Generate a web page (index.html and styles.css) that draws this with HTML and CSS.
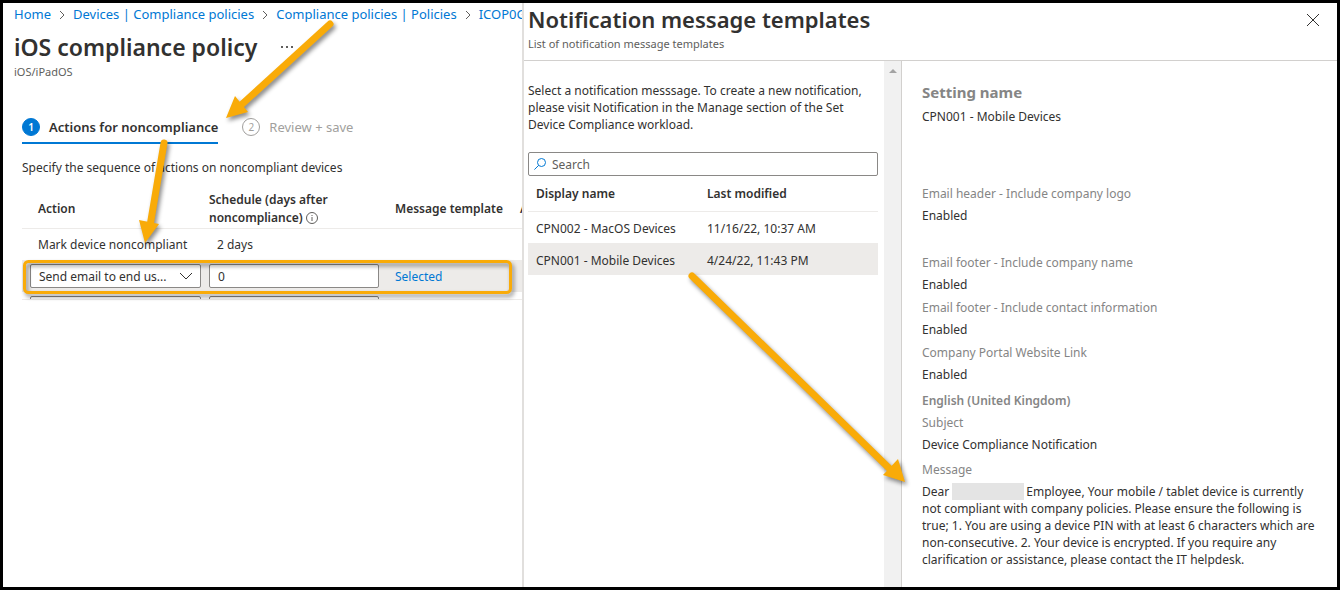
FILE: index.html
```html
<!DOCTYPE html>
<html lang="en">
<head>
    <meta charset="UTF-8">
    <meta name="viewport" content="width=device-width, initial-scale=1.0">
    <title>iOS compliance policy</title>
    <link rel="stylesheet" href="styles.css">
</head>
<body>
    <div class="page">
        <main class="policy">
            <nav class="breadcrumb">
                <a href="#">Home</a>
                <svg class="sep" viewBox="0 0 6 10"><path d="M1 1l4 4-4 4"/></svg>
                <a href="#">Devices | Compliance policies</a>
                <svg class="sep" viewBox="0 0 6 10"><path d="M1 1l4 4-4 4"/></svg>
                <a href="#">Compliance policies | Policies</a>
                <svg class="sep" viewBox="0 0 6 10"><path d="M1 1l4 4-4 4"/></svg>
                <a href="#">ICOP0G</a>
            </nav>
            <div class="title-row">
                <h1>iOS compliance policy</h1>
                <button class="more" type="button" aria-label="More">
                    <svg viewBox="0 0 12 2"><path d="M0 0h2v2H0zM5 0h2v2H5zM10 0h2v2h-2z"/></svg>
                </button>
            </div>
            <p class="subtitle">iOS/iPadOS</p>

            <div class="steps">
                <a class="step active" href="#"><span class="num">1</span>Actions for noncompliance</a>
                <a class="step" href="#"><span class="num">2</span>Review + save</a>
            </div>
            <p class="intro">Specify the sequence of actions on noncompliant devices</p>

            <div class="table-wrap">
                <table class="actions">
                    <thead>
                        <tr>
                            <th class="col-action">Action</th>
                            <th class="col-schedule">Schedule (days after noncompliance)
                                <svg class="info" viewBox="0 0 12 12"><circle cx="6" cy="6" r="5.5"/><path d="M6 5v4M6 3v1"/></svg>
                            </th>
                            <th class="col-template">Message template</th>
                            <th class="col-extra">Additional recipients</th>
                        </tr>
                    </thead>
                    <tbody>
                        <tr>
                            <td class="name">Mark device noncompliant</td>
                            <td class="days">2 days</td>
                            <td></td>
                            <td></td>
                        </tr>
                        <tr class="selected">
                            <td>
                                <div class="dropdown">
                                    <select aria-label="Action">
                                        <option>Send email to end us...</option>
                                    </select>
                                    <svg viewBox="0 0 14 8"><path d="M1 1l6 6 6-6"/></svg>
                                </div>
                            </td>
                            <td><input class="field" type="text" value="0" aria-label="Schedule"></td>
                            <td><a href="#">Selected</a></td>
                            <td></td>
                        </tr>
                        <tr class="next">
                            <td><div class="dropdown"><select aria-label="New action"><option></option></select></div></td>
                            <td><input class="field" type="text" aria-label="New schedule"></td>
                            <td></td>
                            <td></td>
                        </tr>
                    </tbody>
                </table>
            </div>
        </main>

        <section class="blade">
            <header class="blade-header">
                <div>
                    <h2>Notification message templates</h2>
                    <p>List of notification message templates</p>
                </div>
                <button class="close" type="button" aria-label="Close">
                    <svg viewBox="0 0 12 12"><path d="M0 0l12 12M12 0L0 12"/></svg>
                </button>
            </header>
            <div class="blade-body">
                <div class="templates">
                    <p class="help">Select a notification messsage. To create a new notification, please visit Notification in the Manage section of the Set Device Compliance workload.</p>
                    <div class="search">
                        <svg viewBox="0 0 12 12"><circle cx="7.5" cy="4.5" r="4"/><path d="M4.6 7.4L.4 11.6"/></svg>
                        <input type="text" placeholder="Search" aria-label="Search">
                    </div>
                    <table class="template-list">
                        <thead>
                            <tr><th class="col-name">Display name</th><th>Last modified</th></tr>
                        </thead>
                        <tbody>
                            <tr><td>CPN002 - MacOS Devices</td><td>11/16/22, 10:37 AM</td></tr>
                            <tr class="selected"><td>CPN001 - Mobile Devices</td><td>4/24/22, 11:43 PM</td></tr>
                        </tbody>
                    </table>
                </div>
                <div class="scrollbar">
                    <svg viewBox="0 0 8 4"><path d="M0 4l4-4 4 4z"/></svg>
                </div>
                <div class="details">
                    <h3>Setting name</h3>
                    <p class="setting">CPN001 - Mobile Devices</p>
                    <dl>
                        <div class="pair spaced">
                            <dt>Email header - Include company logo</dt>
                            <dd>Enabled</dd>
                        </div>
                        <div class="pair">
                            <dt>Email footer - Include company name</dt>
                            <dd>Enabled</dd>
                        </div>
                        <div class="pair">
                            <dt>Email footer - Include contact information</dt>
                            <dd>Enabled</dd>
                        </div>
                        <div class="pair">
                            <dt>Company Portal Website Link</dt>
                            <dd>Enabled</dd>
                        </div>
                    </dl>
                    <h4>English (United Kingdom)</h4>
                    <dl>
                        <div class="pair subject">
                            <dt>Subject</dt>
                            <dd>Device Compliance Notification</dd>
                        </div>
                        <div class="pair">
                            <dt>Message</dt>
                            <dd>Dear <span class="redacted"></span>Employee, Your mobile / tablet device is currently not compliant with company policies. Please ensure the following is true; 1. You are using a device PIN with at least 6 characters which are non-consecutive. 2. Your device is encrypted. If you require any clarification or assistance, please contact the IT helpdesk.</dd>
                        </div>
                    </dl>
                </div>
            </div>
        </section>

        <!-- callouts drawn over the page -->
        <svg class="callouts" width="1334" height="584" viewBox="3 3 1334 584">
            <rect x="24.5" y="261.5" width="486" height="31" rx="4"/>
            <path class="line" d="M330 24L240 106M164 143L150 226M692 276L892 471"/>
            <path class="head" d="M226 118L235 96L248 112zM145 243L139 220L159 224zM905 482L883 475L898 459z"/>
        </svg>
    </div>
</body>
</html>
```
FILE: styles.css
```css
* {
    box-sizing: border-box;
}
body {
    margin: 0;
    font-family: "Noto Sans", "Open Sans", sans-serif;
    font-size: 12px;
    line-height: 17px;
    color: #323130;
    background: #fff;
}
h1, h2, h3, h4, p, dl, dd {
    margin: 0;
}
a {
    color: #0078d4;
    text-decoration: none;
}
svg {
    fill: none;
    stroke: #605e5c;
}
button {
    padding: 0;
    background: none;
    border: none;
    cursor: pointer;
}
input, select {
    font: inherit;
    color: inherit;
}
table {
    border-collapse: collapse;
}
th, td {
    padding: 0;
    text-align: left;
    font-weight: 400;
}
th {
    font-weight: 600;
}

.page {
    position: relative;
    display: flex;
    min-height: 100vh;
    border: 3px solid #000;
    overflow: hidden;
}

/* policy page */
.policy {
    flex: 1;
    min-width: 0;
    overflow: hidden;
}
.breadcrumb {
    display: flex;
    align-items: center;
    gap: 8px;
    padding: 3px 0 0 11px;
    font-size: 13px;
    white-space: nowrap;
}
.sep {
    flex: none;
    width: 6px;
    height: 10px;
}
.title-row {
    display: flex;
    align-items: center;
    gap: 24px;
    padding: 8px 0 0 11px;
}
h1, h2 {
    font-size: 22px;
    line-height: 32px;
    font-weight: 600;
}
h1 {
    font-size: 23px;
}
.more svg {
    display: block;
    width: 12px;
    height: 2px;
    fill: #605e5c;
    stroke: none;
}
.subtitle {
    padding-left: 11px;
    font-size: 11px;
    color: #605e5c;
}
.steps {
    display: flex;
    gap: 24px;
    padding: 35px 0 0 19px;
    font-size: 13px;
}
.step {
    display: flex;
    align-items: center;
    gap: 9px;
    height: 29px;
    padding-bottom: 3px;
    color: #a19f9d;
    border-bottom: 2px solid transparent;
}
.step.active {
    font-weight: 600;
    color: #323130;
    border-color: #0078d4;
}
.num {
    width: 18px;
    height: 18px;
    border: 1px solid #a19f9d;
    border-radius: 50%;
    font-size: 10px;
    line-height: 16px;
    text-align: center;
}
.active .num {
    color: #fff;
    background: #0078d4;
    border-color: #0078d4;
}
.intro {
    padding: 15px 0 0 19px;
}
.table-wrap {
    height: 124px;
    margin: 0 0 0 19px;
    overflow: hidden;
    border-bottom: 1px solid #edebe9;
}
.actions {
    width: 640px;
    margin-top: 12px;
    table-layout: fixed;
}
.actions th {
    height: 40px;
    padding-top: 3px;
    line-height: 18px;
}
.actions thead {
    border-bottom: 1px solid #edebe9;
}
.actions .col-action {
    width: 187px;
    padding-left: 16px;
}
.col-schedule {
    width: 186px;
}
.actions .col-schedule {
    padding-right: 40px;
}
.col-template {
    width: 125px;
}
.info {
    width: 12px;
    height: 12px;
    vertical-align: -2px;
}
.actions td {
    height: 32px;
}
.actions .name {
    padding-left: 16px;
}
.actions .days {
    padding-left: 8px;
}
.selected {
    background: #edebe9;
}
.dropdown {
    position: relative;
    width: 171px;
    margin-left: 8px;
}
.dropdown select {
    display: block;
    width: 100%;
    height: 24px;
    padding: 0 24px 0 8px;
    appearance: none;
    background: #fff;
    border: 1px solid #8a8886;
    border-radius: 2px;
}
.dropdown svg {
    position: absolute;
    top: 8px;
    right: 8px;
    width: 14px;
    height: 8px;
    stroke: #323130;
    pointer-events: none;
}
.field {
    display: block;
    width: 170px;
    height: 24px;
    padding: 0 8px;
    border: 1px solid #8a8886;
    border-radius: 2px;
}

/* notification blade */
.blade {
    display: flex;
    flex-direction: column;
    flex: none;
    width: 815px;
    border-left: 2px solid #e1dfdd;
}
.blade-header {
    display: flex;
    justify-content: space-between;
    align-items: flex-start;
    height: 58px;
    padding: 0 18px 0 4px;
    border-bottom: 1px solid #d2d0ce;
}
.blade-header p {
    font-size: 11px;
    color: #605e5c;
}
.close {
    margin-top: 11px;
}
.close svg {
    display: block;
    width: 12px;
    height: 12px;
    stroke: #323130;
}
.blade-body {
    display: flex;
    flex: 1;
}
.templates {
    width: 360px;
    padding: 21px 6px 0 4px;
}
.help {
    padding-bottom: 19px;
}
.search {
    display: flex;
    align-items: center;
    gap: 6px;
    height: 24px;
    padding-left: 5px;
    border: 1px solid #8a8886;
    border-radius: 2px;
}
.search svg {
    width: 12px;
    height: 12px;
    stroke: #0078d4;
}
.search input {
    flex: 1;
    height: 22px;
    padding: 0;
    border: none;
    outline: none;
    background: none;
}
.search input::placeholder {
    color: #605e5c;
}
.template-list {
    width: 100%;
    table-layout: fixed;
}
.template-list th, .template-list td {
    height: 32px;
    padding: 2px 0 0 8px;
}
.template-list th {
    height: 35px;
    padding-top: 0;
}
.col-name {
    width: 171px;
}
.template-list thead {
    border-bottom: 1px solid #edebe9;
}
.scrollbar {
    width: 18px;
    padding-top: 8px;
    background: #f1f1f1;
    border-right: 1px solid #d2d0ce;
}
.scrollbar svg {
    display: block;
    width: 8px;
    height: 4px;
    margin: 0 auto;
    fill: #a3a3a3;
    stroke: none;
}
.details {
    flex: 1;
    padding: 19px 18px 8px 20px;
}
h3 {
    font-size: 15px;
    line-height: 24px;
    font-weight: 700;
    color: #858585;
}
.setting {
    padding: 4px 0 60px;
}
dt, h4 {
    color: #858585;
}
h4 {
    padding: 3px 0 5px;
    font-size: 12px;
    line-height: 17px;
    font-weight: 600;
}
.pair {
    display: grid;
    gap: 5px;
    padding-bottom: 6px;
}
.pair.spaced {
    padding-bottom: 30px;
}
.pair.subject {
    padding-bottom: 8px;
}
.redacted {
    display: inline-block;
    width: 72px;
    height: 17px;
    margin-right: 2px;
    vertical-align: top;
    background: #e4e4e4;
}

/* callouts */
.callouts {
    position: absolute;
    top: 0;
    left: 0;
    stroke: #f9ab08;
    pointer-events: none;
    filter: drop-shadow(2px 3px 2px rgba(0, 0, 0, 0.45));
}
.callouts rect {
    stroke-width: 3;
}
.callouts .line {
    stroke-width: 7;
    stroke-linecap: round;
}
.callouts .head {
    fill: #f9ab08;
    stroke: none;
}
```
